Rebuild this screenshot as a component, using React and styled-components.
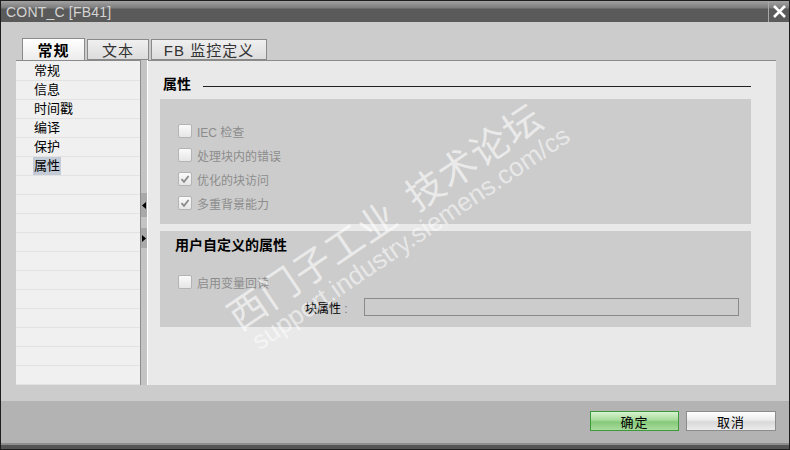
import styled, { createGlobalStyle } from 'styled-components'

const FONT = '"Liberation Sans", "Noto Sans CJK SC", sans-serif'

const GlobalStyle = createGlobalStyle`
  html, body {
    margin: 0;
    padding: 0;
    background: #cccccc;
    overflow: hidden;
  }
  * {
    box-sizing: border-box;
  }
`

// WINDOW

const Window = styled.div`
  position: relative;
  width: 790px;
  height: 450px;
  border: 1px solid #1e1e1e;
  background: #cccccc;
  display: flex;
  flex-direction: column;
  font-family: ${FONT};
  overflow: hidden;
`

const TitleBar = styled.div`
  height: 21px;
  flex-shrink: 0;
  display: flex;
  align-items: center;
  background: linear-gradient(to bottom, #a2a2a2 0px, #7c7c7c 7px, #5a5a5a 8px, #5a5a5a 100%);
`

const Title = styled.div`
  flex: 1;
  padding-left: 5px;
  color: #d4d4d4;
  font-size: 14px;
  letter-spacing: 0.2px;
`

const CloseButton = styled.div`
  width: 21px;
  height: 21px;
  display: flex;
  align-items: center;
  justify-content: center;
  border-left: 1px solid #a8a8a8;
`

// BODY

const Body = styled.div`
  flex: 1;
  display: flex;
  flex-direction: column;
  padding: 16px 13px 13px 15px;
`

const TabRow = styled.div`
  display: flex;
  align-items: flex-end;
  gap: 2px;
  padding-left: 6px;
  height: 22px;
`

const Tab = styled.div`
  width: ${({ w }) => w}px;
  height: ${({ active }) => (active ? '22px' : '21px')};
  display: flex;
  align-items: center;
  justify-content: center;
  border: 1px solid #8a8a8a;
  border-bottom: ${({ active }) => (active ? 'none' : '1px solid #8a8a8a')};
  background: ${({ active }) =>
    active
      ? 'linear-gradient(to bottom, #ffffff, #ececec)'
      : 'linear-gradient(to bottom, #f0f0f0, #dcdcdc)'};
  color: ${({ active }) => (active ? '#000' : '#333')};
  font-size: 15px;
  font-weight: ${({ active }) => (active ? 700 : 400)};
  letter-spacing: 1px;
`

const Panel = styled.div`
  height: 325px;
  display: flex;
`

// NAV

const Nav = styled.div`
  width: 124px;
  background: #f0f0f0;
  border-top: 1px solid #8a8a8a;
  padding-top: 1px;
  display: flex;
  flex-direction: column;
  overflow: hidden;
`

const NavRow = styled.div`
  height: 19px;
  flex-shrink: 0;
  border-bottom: 1px solid #e2e2e2;
  padding-left: 17px;
  display: flex;
  align-items: center;
  font-size: 13px;
  color: #000;
`

const NavLabel = styled.span`
  padding: 0 1px;
  line-height: 18px;
  background: ${({ selected }) => (selected ? '#c3ccd6' : 'transparent')};
`

const Splitter = styled.div`
  width: 8px;
  background: #c4c4c4;
  border-left: 1px solid #8e8e8e;
  border-right: 1px solid #ffffff;
  display: flex;
  flex-direction: column;
  padding-top: 133px;
  gap: 11px;
`

const SplitButton = styled.div`
  height: ${({ h }) => h}px;
  background: #a9a9a9;
  display: flex;
  align-items: center;
  justify-content: ${({ dir }) => (dir === 'left' ? 'flex-end' : 'flex-start')};
  padding: 0 1px;
`

// CONTENT

const Content = styled.div`
  flex: 1;
  background: #e9e9e9;
  border-top: 1px solid #8a8a8a;
  padding: 12px 25px 0 12px;
  display: flex;
  flex-direction: column;
`

const HeadingRow = styled.div`
  display: flex;
  align-items: center;
  gap: 12px;
  height: 20px;
  padding-left: 3px;
`

const Heading = styled.div`
  font-size: 14px;
  font-weight: 700;
  color: #000;
`

const Rule = styled.div`
  flex: 1;
  height: 1px;
  background: #222;
  margin-top: 7px;
`

const Section = styled.div`
  background: #cccccc;
  height: ${({ h }) => h}px;
  margin-top: ${({ mt }) => mt}px;
  display: flex;
  flex-direction: column;
  padding-left: 18px;
  padding-top: ${({ pt }) => pt}px;
`

const SectionTitle = styled.div`
  font-size: 14px;
  font-weight: 700;
  color: #000;
  height: 22px;
  display: flex;
  align-items: center;
  margin-left: -3px;
  margin-bottom: 15px;
`

const CheckRow = styled.div`
  height: 24px;
  display: flex;
  align-items: center;
  gap: 5px;
`

const Box = styled.div`
  width: 14px;
  height: 14px;
  border: 1px solid #b4b4b4;
  border-radius: 2px;
  background: linear-gradient(to bottom, #fafafa, #e6e6e6);
  display: flex;
  align-items: center;
  justify-content: center;
`

const CheckLabel = styled.span`
  font-size: 12px;
  color: #8c8c8c;
`

const FieldRow = styled.div`
  display: flex;
  align-items: center;
  height: 18px;
  margin-top: 4px;
  padding-left: 127px;
  padding-right: 12px;
`

const FieldLabel = styled.span`
  width: 59px;
  font-size: 12px;
  color: #000;
`

const Colon = styled.span`
  color: #6a7a8c;
`

const FieldInput = styled.div`
  flex: 1;
  height: 18px;
  border: 1px solid #8a8a8a;
  background: #cccccc;
`

// FOOTER

const Footer = styled.div`
  height: 42px;
  flex-shrink: 0;
  background: #b3b3b3;
  display: flex;
  justify-content: flex-end;
  align-items: flex-start;
  gap: 7px;
  padding: 10px 13px 0 0;
`

const Button = styled.div`
  width: ${({ w }) => w}px;
  height: 20px;
  display: flex;
  align-items: center;
  justify-content: center;
  font-size: 13px;
  color: #000;
  border: 1px solid ${({ primary }) => (primary ? '#3c9a3c' : '#8c8c8c')};
  background: ${({ primary }) =>
    primary
      ? 'linear-gradient(to bottom, #d8f2d0 0%, #a6dc9a 45%, #86c97a 55%, #a8dc9c 100%)'
      : 'linear-gradient(to bottom, #ffffff 0%, #ececec 45%, #d8d8d8 55%, #ececec 100%)'};
  letter-spacing: 1px;
`

const BottomStrip = styled.div`
  height: 6px;
  flex-shrink: 0;
  background: #555555;
  border-top: 2px solid #8e8e8e;
`

// WATERMARK

const Watermark = styled.div`
  position: absolute;
  left: 396px;
  top: 222px;
  transform: translate(-50%, -50%) rotate(-34deg);
  display: flex;
  flex-direction: column;
  align-items: flex-start;
  pointer-events: none;
  color: rgba(255, 255, 255, 0.6);
  white-space: nowrap;
`

const WatermarkCn = styled.div`
  font-family: "Noto Sans CJK SC", sans-serif;
  font-size: 38px;
  line-height: 40px;
  letter-spacing: 1px;
`

const WatermarkUrl = styled.div`
  font-family: "Liberation Sans", sans-serif;
  font-size: 26px;
  line-height: 28px;
  margin-left: 6px;
  color: rgba(255, 255, 255, 0.55);
`

function Check({ checked, label }) {
  return (
    <CheckRow>
      <Box>
        {checked && (
          <svg width="10" height="10" viewBox="0 0 10 10">
            <path d="M1.5 5.2 L4 7.8 L8.6 2" stroke="#8a8a8a" strokeWidth="1.8" fill="none" />
          </svg>
        )}
      </Box>
      <CheckLabel>{label}</CheckLabel>
    </CheckRow>
  )
}

const navItems = ['常规', '信息', '时间戳', '编译', '保护', '属性']

export default function App() {
  const rows = [...navItems, ...Array(11).fill('')]
  return (
    <>
      <GlobalStyle />
      <Window>
        <TitleBar>
          <Title>CONT_C [FB41]</Title>
          <CloseButton>
            <svg width="15" height="15" viewBox="0 0 15 15">
              <path d="M2 2 L13 13 M13 2 L2 13" stroke="#ffffff" strokeWidth="2.6" />
            </svg>
          </CloseButton>
        </TitleBar>
        <Body>
          <TabRow>
            <Tab active w={63}>常规</Tab>
            <Tab w={62}>文本</Tab>
            <Tab w={116}>FB 监控定义</Tab>
          </TabRow>
          <Panel>
            <Nav>
              {rows.map((item, i) => (
                <NavRow key={i}>
                  <NavLabel selected={item === '属性'}>{item}</NavLabel>
                </NavRow>
              ))}
            </Nav>
            <Splitter>
              <SplitButton h={24} dir="left">
                <svg width="4" height="7" viewBox="0 0 4 7">
                  <path d="M4 0 L0 3.5 L4 7 Z" fill="#000" />
                </svg>
              </SplitButton>
              <SplitButton h={20} dir="right">
                <svg width="4" height="7" viewBox="0 0 4 7">
                  <path d="M0 0 L4 3.5 L0 7 Z" fill="#000" />
                </svg>
              </SplitButton>
            </Splitter>
            <Content>
              <HeadingRow>
                <Heading>属性</Heading>
                <Rule />
              </HeadingRow>
              <Section h={125} mt={6} pt={20}>
                <Check label="IEC 检查" />
                <Check label="处理块内的错误" />
                <Check checked label="优化的块访问" />
                <Check checked label="多重背景能力" />
              </Section>
              <Section h={96} mt={7} pt={2}>
                <SectionTitle>用户自定义的属性</SectionTitle>
                <Check label="启用变量回读" />
                <FieldRow>
                  <FieldLabel>
                    块属性 <Colon>:</Colon>
                  </FieldLabel>
                  <FieldInput />
                </FieldRow>
              </Section>
            </Content>
          </Panel>
        </Body>
        <Footer>
          <Button primary w={89}>确定</Button>
          <Button w={90}>取消</Button>
        </Footer>
        <BottomStrip />
        <Watermark>
          <WatermarkCn>西门子工业&nbsp;&nbsp;技术论坛</WatermarkCn>
          <WatermarkUrl>support.industry.siemens.com/cs</WatermarkUrl>
        </Watermark>
      </Window>
    </>
  )
}
